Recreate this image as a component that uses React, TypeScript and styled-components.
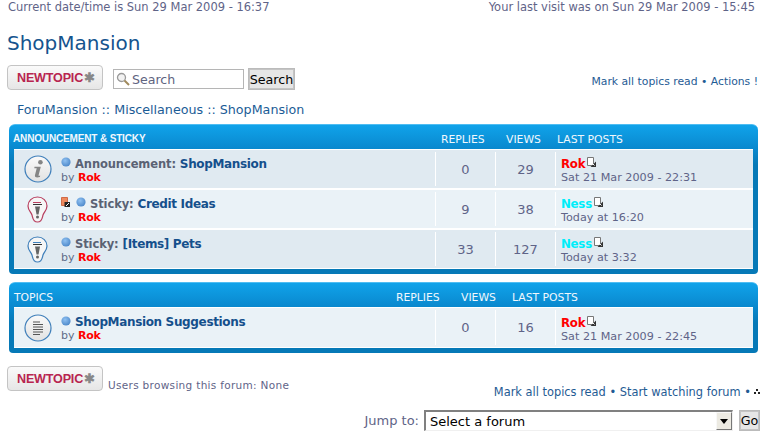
import React from 'react'
import styled, { createGlobalStyle, css } from 'styled-components'

const GlobalStyle = createGlobalStyle`
  html, body {
    margin: 0;
    padding: 0;
    background: #fff;
  }
  body {
    font-family: "DejaVu Sans", Verdana, sans-serif;
    font-size: 11px;
    color: #5a5f85;
  }
`

const Page = styled.div`
  width: 768px;
  height: 440px;
  overflow: hidden;
  box-sizing: border-box;
  padding: 0 8px 0 7px;
`

const TopBar = styled.div`
  display: flex;
  justify-content: space-between;
  height: 14px;
  line-height: 14px;
  padding: 0 5px 0 1px;
  color: #5f6488;
  font-size: 11.48px;
`

const Title = styled.h1`
  margin: 15px 0 0;
  height: 28px;
  line-height: 28px;
  font-size: 20px;
  font-weight: 400;
  color: #15548e;
`

const Toolbar = styled.div`
  display: flex;
  align-items: flex-end;
  margin-top: 8px;
  height: 25px;
`

const NewTopic = styled.div`
  box-sizing: border-box;
  width: 96px;
  height: 25px;
  display: flex;
  align-items: center;
  padding-left: 9px;
  border: 1px solid #c4c4c4;
  border-radius: 4px;
  background: linear-gradient(#fafafa, #e6e6e6);
  font-family: "Liberation Sans", Arial, sans-serif;
  font-size: 12.6px;
  font-weight: 700;
  letter-spacing: -0.2px;
  color: #b8254f;
`

const Star = styled.span`
  color: #888;
  font-size: 13px;
  margin-left: 1px;
  line-height: 1;
`

const SearchBox = styled.div`
  box-sizing: border-box;
  margin: 0 0 1px 10px;
  width: 131px;
  height: 20px;
  display: flex;
  align-items: center;
  gap: 2px;
  padding-left: 2px;
  border: 1px solid #b5b5b5;
  font-size: 12.6px;
  color: #60647f;
`

const GreyButton = styled.div`
  box-sizing: border-box;
  display: flex;
  align-items: center;
  justify-content: center;
  border: 2px solid #c4c4c4;
  outline: 1px solid #bbb;
  outline-offset: -1px;
  background: #e6e6e6;
  color: #000;
  font-size: 12.7px;
`

const SearchButton = styled(GreyButton)`
  margin-left: 4px;
  width: 47px;
  height: 22px;
`

const ToolLinks = styled.div`
  margin-left: auto;
  padding: 0 2px 2px 0;
  font-size: 10.8px;
  color: #1f5b94;
`

const Crumbs = styled.div`
  margin: 10px 0 0 10px;
  height: 20px;
  line-height: 20px;
  font-size: 12.7px;
  color: #1b5c96;
`

const Panel = styled.section<{ $top: number }>`
  box-sizing: border-box;
  margin: ${p => p.$top}px 2px 0 2px;
  padding: 0 5px 5px;
  border-radius: 6px 6px 4px 4px;
  border-top: 1px solid #4fbdf2;
  background: linear-gradient(#10a3ea 0, #0a8ad0 22px, #0679b7 40px);
`

const HeadRow = styled.div`
  display: flex;
  align-items: center;
  height: 24px;
  padding-top: 4px;
  box-sizing: border-box;
  color: #f1f8fd;
  font-size: 10.8px;
`

const HeadTitle = styled.div<{ $bold?: boolean }>`
  flex: 1;
  ${p => p.$bold && css`
    margin: -2px 0 0 -1px;
    font-family: "Liberation Sans", Arial, sans-serif;
    font-size: 10px;
    font-weight: 700;
    letter-spacing: -0.15px;
  `}
`

const HeadCell = styled.div<{ $w: number }>`
  width: ${p => p.$w}px;
`

const Rows = styled.div`
  display: flex;
  flex-direction: column;
  gap: 2px;
  padding: 1px 0;
  background: #fff;
`

const Row = styled.div<{ $alt?: boolean; $h: number }>`
  display: grid;
  grid-template-columns: 47px 1fr 60px 60px 198px;
  align-items: stretch;
  height: ${p => p.$h}px;
  background: ${p => (p.$alt ? '#eaf2f7' : '#e0eaf1')};
`

const IconCell = styled.div`
  display: flex;
  align-items: center;
  justify-content: center;
`

const TopicCell = styled.div`
  display: flex;
  flex-direction: column;
  justify-content: center;
  padding-top: 2px;
  line-height: 13px;
`

const TopicLine = styled.div`
  display: flex;
  align-items: center;
  gap: 4px;
  font-size: 11.5px;
  font-weight: 700;
  letter-spacing: -0.1px;
  line-height: 14px;
  color: #5a6274;
`

const TopicName = styled.span`
  color: #15508c;
  font-size: 12px;
  letter-spacing: -0.35px;
`

const ByLine = styled.div`
  font-size: 11px;
  color: #5f6d88;
`

const User = styled.span<{ $c: string }>`
  color: ${p => p.$c};
  font-weight: 700;
  letter-spacing: -0.25px;
`

const CountCell = styled.div`
  display: flex;
  align-items: center;
  justify-content: center;
  margin: 2px 0;
  border-left: 1px solid #fff;
  font-size: 13px;
  color: #5f6488;
`

const LastCell = styled.div<{ $h: number }>`
  margin: 2px 0;
  padding-left: 5px;
  padding-top: ${p => p.$h - 36}px;
  border-left: 1px solid #fff;
  font-size: 11.2px;
  line-height: 13px;
  color: #5f6488;
`

const LastUser = styled.div`
  display: flex;
  align-items: flex-start;
  gap: 2px;
  font-size: 11.8px;
  height: 13px;
  padding-top: 4px;
`

const PostSvg = styled.svg`
  margin-top: -1px;
`

const BottomBar = styled.div`
  display: flex;
  align-items: flex-end;
  margin-top: 13px;
  height: 25px;
`

const UsersNote = styled.div`
  margin-left: 5px;
  font-size: 10.5px;
  color: #5f6488;
  letter-spacing: 0.31px;
`

const BottomLinks = styled.div`
  display: flex;
  justify-content: flex-end;
  align-items: center;
  gap: 3px;
  margin-top: -8px;
  height: 17px;
  font-size: 11.4px;
  color: #1f5b94;
`

const JumpRow = styled.div`
  display: flex;
  justify-content: flex-end;
  align-items: center;
  margin-top: 10px;
  height: 21px;
  font-size: 13px;
  color: #5f6488;
`

const Select = styled.div`
  box-sizing: border-box;
  display: flex;
  align-items: center;
  justify-content: space-between;
  width: 309px;
  height: 21px;
  margin-left: 5px;
  padding-left: 4px;
  border: 1px solid #f0f0f0;
  border-top: 2px solid #808080;
  border-left: 2px solid #808080;
  color: #000;
  font-size: 13px;
`

const SelectArrow = styled.div`
  box-sizing: border-box;
  width: 16px;
  height: 18px;
  display: flex;
  align-items: center;
  justify-content: center;
  background: #eceae2;
  border: 1px solid;
  border-color: #f8f8f8 #777 #777 #f8f8f8;
`

const GoButton = styled(GreyButton)`
  margin-left: 6px;
  width: 21px;
  height: 21px;
`

const DotSvg = styled.svg`
  flex: none;
  margin-top: -3px;
`

const HotSvg = styled(DotSvg)`
  margin-right: 2px;
`

function Dot() {
  return (
    <DotSvg width="10" height="10" viewBox="0 0 10 10">
      <defs>
        <radialGradient id="dot" cx="40%" cy="35%" r="70%">
          <stop offset="0" stopColor="#8fc1f2" />
          <stop offset="1" stopColor="#4a86c8" />
        </radialGradient>
      </defs>
      <circle cx="5" cy="5" r="4.6" fill="url(#dot)" />
    </DotSvg>
  )
}

function PostIcon() {
  return (
    <PostSvg width="9" height="10" viewBox="0 0 9 10">
      <path d="M.5.500h6v8h-6z" fill="#fff" stroke="#777" />
      <path d="M9 4.500V10H3.500z" fill="#333" />
      <path d="M4.500 5.500l3 3" stroke="#fff" />
    </PostSvg>
  )
}

function HotIcon() {
  return (
    <HotSvg width="9" height="10" viewBox="0 0 9 10">
      <path d="M.5.500h6v8h-6z" fill="#ee8a5e" stroke="#c9552e" strokeWidth="0.8" />
      <path d="M3.500 5H9v5H3.500z" fill="#222" />
      <path d="M5 9l3-3" stroke="#fff" />
    </HotSvg>
  )
}

function CircleIcon({ kind }: { kind: 'info' | 'doc' }) {
  return (
    <svg width="28" height="28" viewBox="0 0 28 28">
      <defs>
        <linearGradient id="disc" x1="0" y1="0" x2="0" y2="1">
          <stop offset="0" stopColor="#fafafa" />
          <stop offset="1" stopColor="#e2e2e2" />
        </linearGradient>
      </defs>
      <circle cx="14" cy="14" r="13" fill="url(#disc)" stroke="#3f7fba" strokeWidth="1.2" />
      {kind === 'info' ? (
        <g fill="#858585">
          <circle cx="16.400" cy="7.300" r="2.300" />
          <path d="M10.500 11.800h6.300l-2.300 8.600c-.1.500.3.600 1.700.3l-.3 1.400c-2.800.7-5.300.6-5-1.500l1.800-7.300h-2.400z" />
        </g>
      ) : (
        <path d="M9 8h7M9 10.500h10M9 13h10M9 15.500h10M9 18h10M9 20.500h7" stroke="#555" strokeWidth="1" />
      )}
    </svg>
  )
}

function BulbIcon({ color }: { color: string }) {
  return (
    <svg width="21" height="27" viewBox="0 0 21 27">
      <path
        d="M10.500 1C5 1 1 5 1 10c0 4 3 6 4 9 .8 3 1 7 5.500 7s4.700-4 5.500-7c1-3 4-5 4-9C20 5 16 1 10.500 1z"
        fill="#f6f6f6"
        stroke={color}
        strokeWidth="1.200"
      />
      <path d="M6 6.500h8" stroke={color} strokeWidth="1" />
      <path d="M6 8.500h9" stroke="#333" strokeWidth="1" />
      <path d="M8 10.500h5l-1.500 8h-2z" fill="#666" />
      <circle cx="10.500" cy="21" r="1.500" fill="#666" />
    </svg>
  )
}

function SearchGlass() {
  return (
    <svg width="14" height="14" viewBox="0 0 14 14">
      <circle cx="5.500" cy="5.500" r="4" fill="#f2f2f2" stroke="#9a9a9a" strokeWidth="1.300" />
      <path d="M8.500 8.500l4.500 4.500" stroke="#a08a5c" strokeWidth="2" />
    </svg>
  )
}

interface ITopicRow {
  alt?: boolean
  h?: number
  icon: React.ReactNode
  hot?: boolean
  prefix?: string
  name: string
  replies: number
  views: number
  user: string
  userColor: string
  date: string
}

function TopicRow({ alt, h = 38, icon, hot, prefix, name, replies, views, user, userColor, date }: ITopicRow) {
  return (
    <Row $alt={alt} $h={h}>
      <IconCell>{icon}</IconCell>
      <TopicCell>
        <TopicLine>
          {hot && <HotIcon />}
          <Dot />
          <span>
            {prefix && `${prefix} `}
            <TopicName>{name}</TopicName>
          </span>
        </TopicLine>
        <ByLine>by <User $c="#f00">Rok</User></ByLine>
      </TopicCell>
      <CountCell>{replies}</CountCell>
      <CountCell>{views}</CountCell>
      <LastCell $h={h}>
        <LastUser>
          <User $c={userColor}>{user}</User>
          <PostIcon />
        </LastUser>
        {date}
      </LastCell>
    </Row>
  )
}

function NewTopicButton() {
  return (
    <NewTopic>
      NEWTOPIC<Star>✱</Star>
    </NewTopic>
  )
}

export default function App() {
  return (
    <Page>
      <GlobalStyle />
      <TopBar>
        <span>Current date/time is Sun 29 Mar 2009 - 16:37</span>
        <span>Your last visit was on Sun 29 Mar 2009 - 15:45</span>
      </TopBar>
      <Title>ShopMansion</Title>
      <Toolbar>
        <NewTopicButton />
        <SearchBox><SearchGlass />Search</SearchBox>
        <SearchButton>Search</SearchButton>
        <ToolLinks>Mark all topics read • Actions !</ToolLinks>
      </Toolbar>
      <Crumbs>ForuMansion :: Miscellaneous :: ShopMansion</Crumbs>
      <Panel $top={4}>
        <HeadRow>
          <HeadTitle $bold>ANNOUNCEMENT &amp; STICKY</HeadTitle>
          <HeadCell $w={65}>REPLIES</HeadCell>
          <HeadCell $w={51}>VIEWS</HeadCell>
          <HeadCell $w={196}>LAST POSTS</HeadCell>
        </HeadRow>
        <Rows>
          <TopicRow icon={<CircleIcon kind="info" />} prefix="Announcement:" name="ShopMansion" replies={0} views={29} user="Rok" userColor="#f00" date="Sat 21 Mar 2009 - 22:31" />
          <TopicRow alt hot icon={<BulbIcon color="#b83f5f" />} prefix="Sticky:" name="Credit Ideas" replies={9} views={38} user="Ness" userColor="#00eefa" date="Today at 16:20" />
          <TopicRow icon={<BulbIcon color="#3f7fba" />} prefix="Sticky:" name="[Items] Pets" replies={33} views={127} user="Ness" userColor="#00eefa" date="Today at 3:32" />
        </Rows>
      </Panel>
      <Panel $top={8}>
        <HeadRow>
          <HeadTitle>TOPICS</HeadTitle>
          <HeadCell $w={65}>REPLIES</HeadCell>
          <HeadCell $w={51}>VIEWS</HeadCell>
          <HeadCell $w={241}>LAST POSTS</HeadCell>
        </HeadRow>
        <Rows>
          <TopicRow alt h={39} icon={<CircleIcon kind="doc" />} name="ShopMansion Suggestions" replies={0} views={16} user="Rok" userColor="#f00" date="Sat 21 Mar 2009 - 22:45" />
        </Rows>
      </Panel>
      <BottomBar>
        <NewTopicButton />
        <UsersNote>Users browsing this forum: None</UsersNote>
      </BottomBar>
      <BottomLinks>
        Mark all topics read • Start watching forum •
        <svg width="6" height="5" viewBox="0 0 6 5"><path d="M2 0h2v2H2zM0 3h2v2H0zM4 3h2v2H4z" fill="#222" /></svg>
      </BottomLinks>
      <JumpRow>
        Jump to:
        <Select>
          Select a forum
          <SelectArrow>
            <svg width="8" height="5" viewBox="0 0 8 5"><path d="M0 0h8L4 5z" fill="#000" /></svg>
          </SelectArrow>
        </Select>
        <GoButton>Go</GoButton>
      </JumpRow>
    </Page>
  )
}
